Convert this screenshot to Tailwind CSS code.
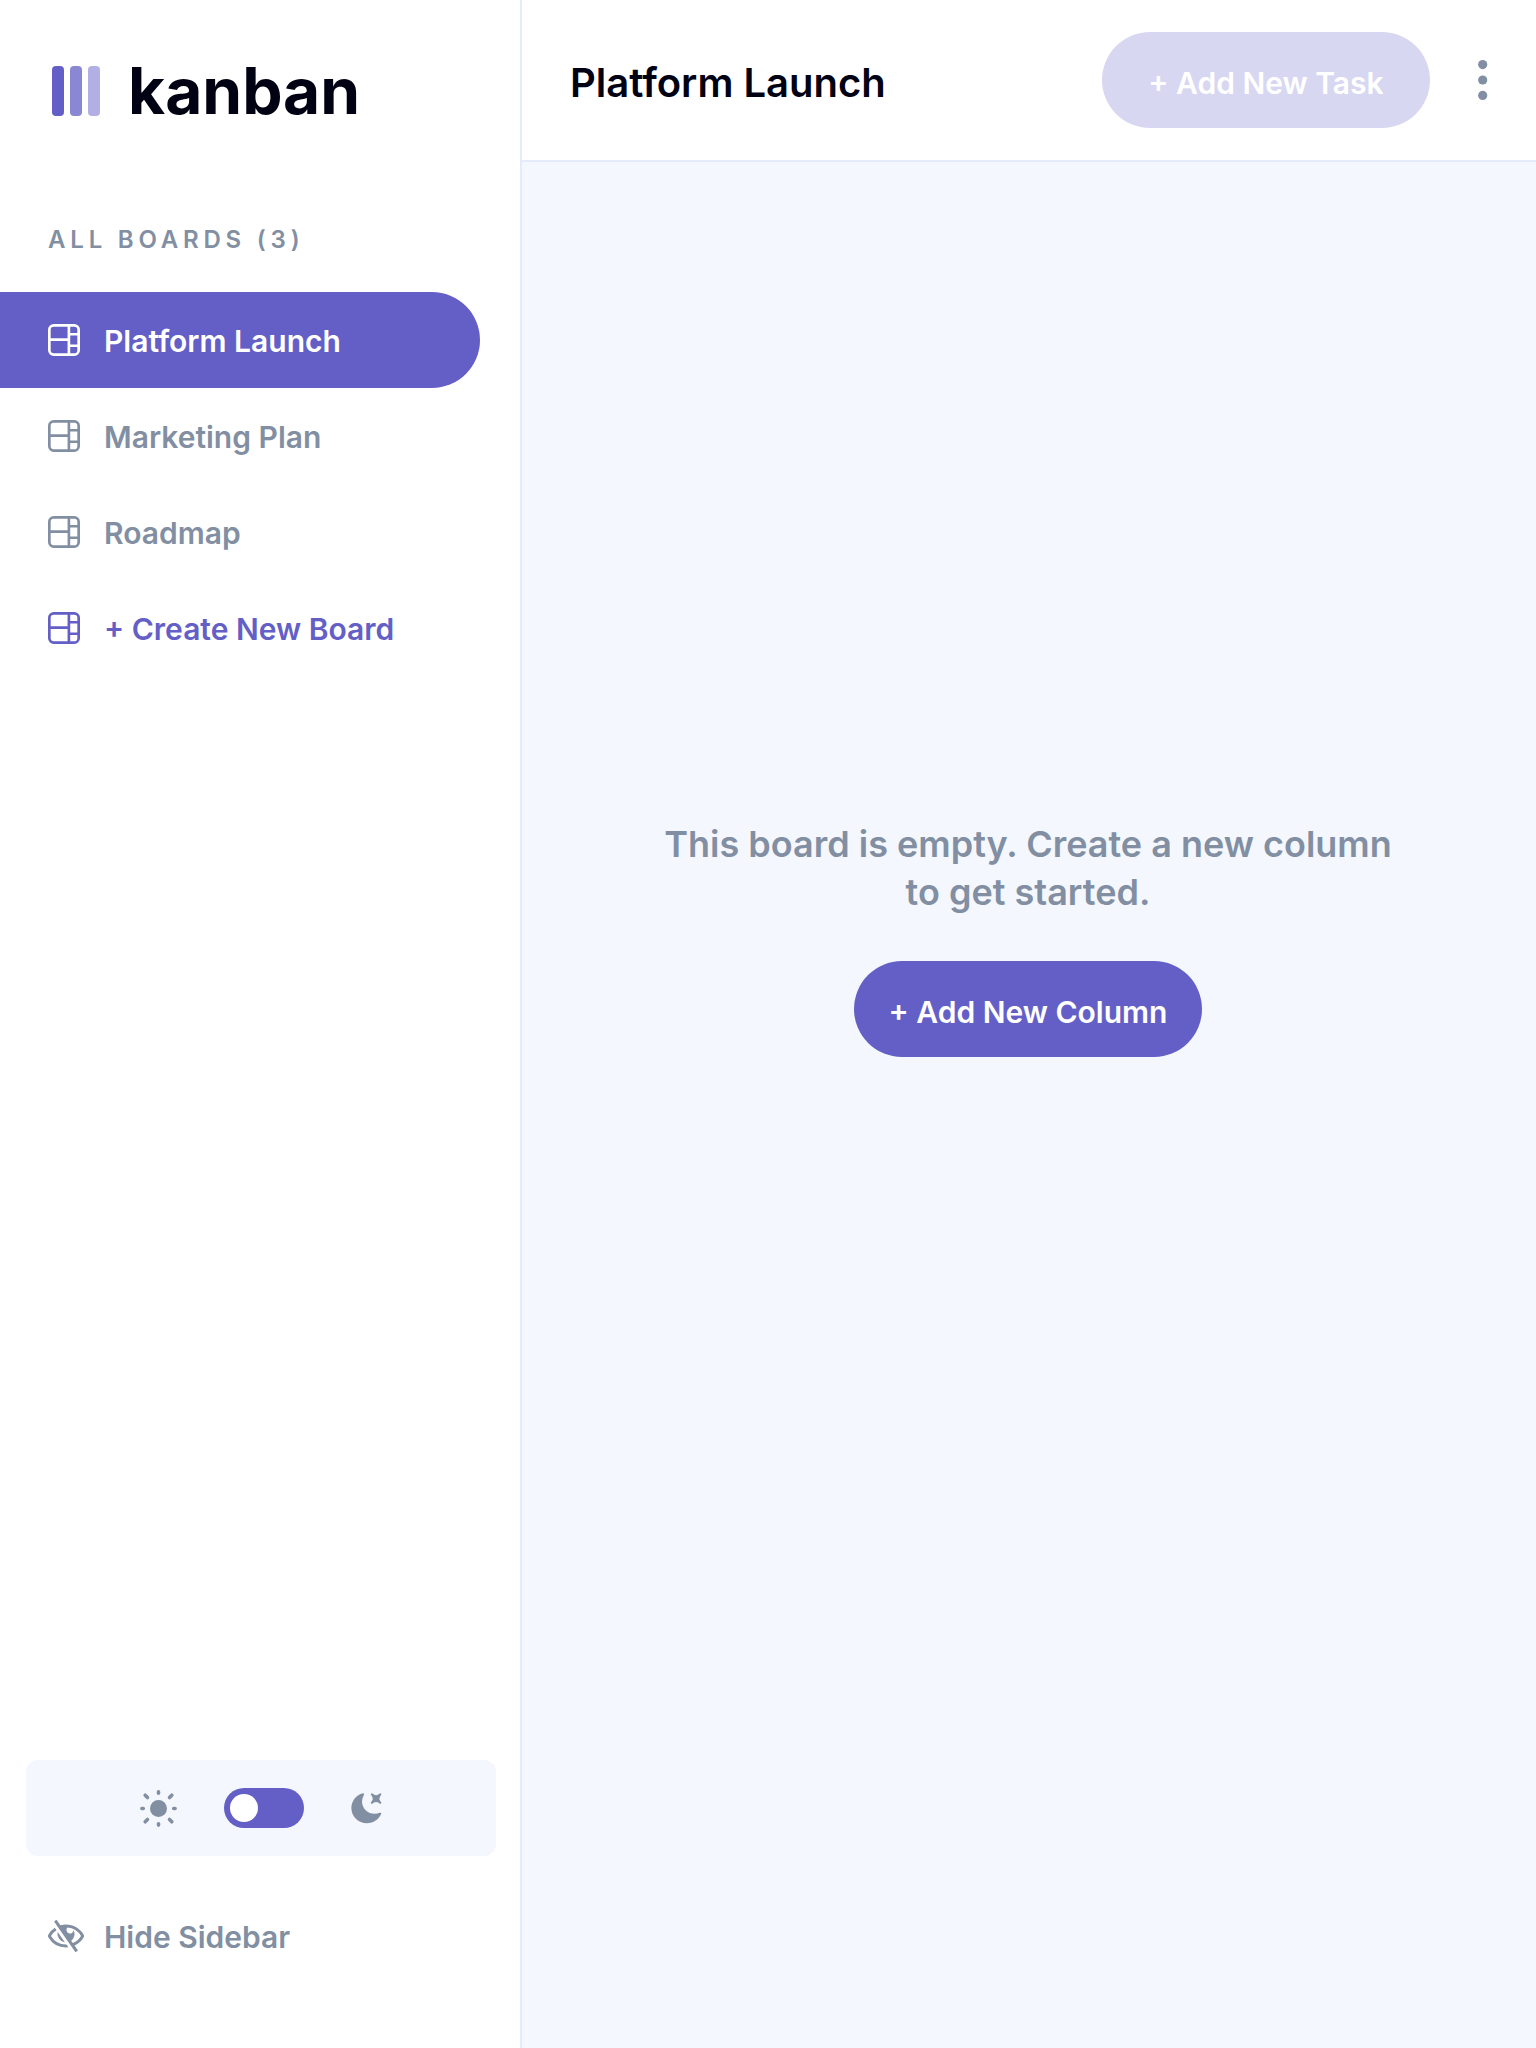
<!DOCTYPE html>
<html lang="en">
<head>
<meta charset="utf-8">
<meta name="viewport" content="width=device-width, initial-scale=1">
<title>Kanban</title>
<script src="https://cdn.jsdelivr.net/npm/@tailwindcss/browser@4"></script>
</head>
<body class="flex min-h-screen bg-[#f4f7fd] font-['Inter',sans-serif] text-[30px] leading-10 font-semibold text-[#828fa3]">
<svg class="hidden" aria-hidden="true">
  <symbol id="board" viewBox="0 0 16 16"><path fill="currentColor" d="M0 2.889A2.889 2.889 0 0 1 2.889 0H13.11A2.889 2.889 0 0 1 16 2.889V13.11A2.888 2.888 0 0 1 13.111 16H2.89A2.889 2.889 0 0 1 0 13.111V2.89Zm1.333 5.555v4.667c0 .859.697 1.556 1.556 1.556h6.889V8.444H1.333Zm8.445-1.333V1.333h-6.89A1.556 1.556 0 0 0 1.334 2.89V7.11h8.445Zm4.889-1.333H11.11v4.444h3.556V5.778Zm0 5.778H11.11v3.11h2a1.556 1.556 0 0 0 1.556-1.555v-1.555Zm0-7.112V2.89a1.555 1.555 0 0 0-1.556-1.556h-2v3.111h3.556Z"/></symbol>
</svg>

<aside class="flex w-[522px] shrink-0 flex-col border-r-2 border-[#e4ebfa] bg-white">
  <a href="#" class="mt-12 ml-[52px] flex h-[86px] items-center gap-7 text-[64px] font-bold text-[#000112]">
    <svg class="h-[50px] w-12" viewBox="0 0 48 50" fill="#635fc7" aria-hidden="true">
      <rect width="12" height="50" rx="4"/><rect x="18" width="12" height="50" rx="4" opacity=".75"/><rect x="36" width="12" height="50" rx="4" opacity=".5"/>
    </svg>
    <span>kanban</span>
  </a>

  <h2 class="mt-[86px] ml-12 text-2xl leading-10 tracking-[4.8px]">ALL BOARDS (3)</h2>

  <nav class="mt-8 mr-10 flex flex-col" aria-label="Boards">
    <a href="#" aria-current="page" class="flex h-24 items-center gap-6 rounded-r-full bg-[#635fc7] pl-12 text-white"><svg class="size-8"><use href="#board"/></svg><span class="pt-0.5">Platform Launch</span></a>
    <a href="#" class="flex h-24 items-center gap-6 pl-12"><svg class="size-8"><use href="#board"/></svg><span class="pt-0.5">Marketing Plan</span></a>
    <a href="#" class="flex h-24 items-center gap-6 pl-12"><svg class="size-8"><use href="#board"/></svg><span class="pt-0.5">Roadmap</span></a>
    <button type="button" class="flex h-24 items-center gap-6 pl-12 text-[#635fc7]"><svg class="size-8"><use href="#board"/></svg><span class="pt-0.5">+ Create New Board</span></button>
  </nav>

  <div class="mr-6 mt-auto ml-[26px] flex h-24 items-center justify-center gap-[47px] rounded-xl bg-[#f4f7fd]">
    <svg class="size-[37px]" viewBox="0 0 37 37" fill="none" stroke="currentColor" stroke-width="3.6" stroke-linecap="round" aria-hidden="true">
      <circle cx="18.5" cy="18.5" r="8.5" fill="currentColor" stroke="none"/>
      <path d="M18.5 1.9v1.4M18.5 33.7v1.4M1.9 18.5h1.4M33.7 18.5h1.4M5.2 5.2l2.3 2.3M29.5 29.5l2.3 2.3M5.2 31.8l2.3-2.3M29.5 7.5l2.3-2.3"/>
    </svg>
    <label class="relative flex h-10 w-20 items-center rounded-full bg-[#635fc7] px-1.5">
      <input type="checkbox" aria-label="Dark mode" class="peer absolute inset-0 appearance-none">
      <span class="size-7 rounded-full bg-white peer-checked:ml-auto"></span>
    </label>
    <svg class="size-8" viewBox="0.5 0 16 16" fill="currentColor" aria-hidden="true"><path d="M6.474.682c.434-.11.718.406.481.78A6.067 6.067 0 0 0 6.01 4.72c0 3.418 2.827 6.187 6.314 6.187.89.002 1.77-.182 2.584-.54.408-.18.894.165.724.57-1.16 2.775-3.944 4.73-7.194 4.73-4.292 0-7.771-3.41-7.771-7.615 0-3.541 2.466-6.518 5.807-7.37Zm8.433.07c.442-.294.969.232.674.674l-.525.787a1.943 1.943 0 0 0 0 2.157l.525.788c.295.441-.232.968-.674.673l-.787-.525a1.943 1.943 0 0 0-2.157 0l-.786.525c-.442.295-.97-.232-.675-.673l.525-.788a1.943 1.943 0 0 0 0-2.157l-.525-.787c-.295-.442.232-.968.674-.673l.787.525a1.943 1.943 0 0 0 2.157 0l.787-.525Z"/></svg>
  </div>

  <button type="button" class="mt-8 mb-16 flex h-24 items-center gap-5 pl-12">
    <svg class="h-8 w-9" viewBox="0 0 18 16" fill="currentColor" aria-hidden="true"><path d="M8.522 11.223a4.252 4.252 0 0 1-3.654-5.22l3.654 5.22ZM9 12.25A8.685 8.685 0 0 1 1.5 8a8.612 8.612 0 0 1 2.76-2.864l-.86-1.23A10.112 10.112 0 0 0 .208 7.238a1.5 1.5 0 0 0 0 1.524A10.187 10.187 0 0 0 9 13.75c.414 0 .828-.025 1.239-.074l-1-1.43A8.88 8.88 0 0 1 9 12.25Zm8.792-3.488a10.14 10.14 0 0 1-4.486 4.046l1.504 2.148a.375.375 0 0 1-.092.523l-.648.453a.375.375 0 0 1-.523-.092L3.19 1.044A.375.375 0 0 1 3.282.52L3.93.068a.375.375 0 0 1 .523.092l1.735 2.479A10.308 10.308 0 0 1 9 2.25c3.746 0 7.031 2 8.792 4.988a1.5 1.5 0 0 1 0 1.524ZM16.5 8a8.674 8.674 0 0 0-6.755-4.219A1.75 1.75 0 1 0 12.75 5v-.001a4.25 4.25 0 0 1-1.154 5.366l.834 1.192A8.641 8.641 0 0 0 16.5 8Z"/></svg>
    <span class="pt-0.5">Hide Sidebar</span>
  </button>
</aside>

<div class="flex min-w-0 flex-1 flex-col">
  <header class="flex h-[162px] items-center justify-between border-b-2 border-[#e4ebfa] bg-white px-12">
    <h1 class="pt-1.5 text-[40px] leading-12 text-[#000112]">Platform Launch</h1>
    <div class="flex items-center gap-12">
      <button type="button" disabled class="h-24 w-[328px] rounded-full bg-[#d8d7f1] pt-1.5 text-white">+ Add New Task</button>
      <button type="button" aria-label="Board menu"><svg class="h-10 w-2.5" viewBox="0 0 10 40" fill="currentColor"><circle cx="4.7" cy="4.6" r="4.6"/><circle cx="4.7" cy="20" r="4.6"/><circle cx="4.7" cy="35.4" r="4.6"/></svg></button>
    </div>
  </header>
  <main class="flex flex-1 flex-col items-center pr-12 pb-1 pl-[46px]">
    <div class="grow-2"></div>
    <p class="max-w-[740px] text-center text-[36px] leading-12">This board is empty. Create a new column to get started.</p>
    <button type="button" class="mt-[45px] h-24 w-[348px] rounded-full bg-[#635fc7] pt-1.5 text-white">+ Add New Column</button>
    <div class="grow-3"></div>
  </main>
</div>
</body>
</html>
